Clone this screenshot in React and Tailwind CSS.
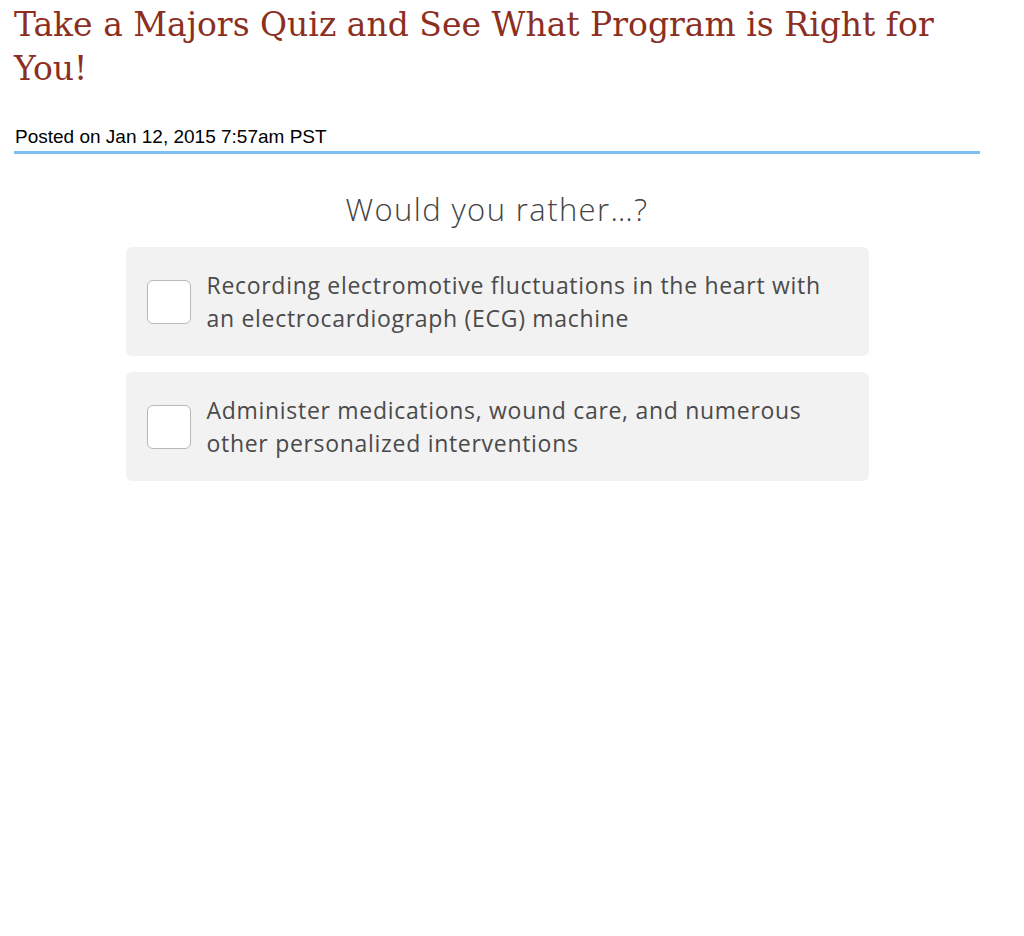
import React from 'react';

const answers = [
  'Recording electromotive fluctuations in the heart with an electrocardiograph (ECG) machine',
  'Administer medications, wound care, and numerous other personalized interventions',
];

function Answer({ text }) {
  return (
    <label className="flex items-center gap-4 bg-[#f2f2f2] rounded-md pl-[21px] pr-[30px] h-[109px] cursor-pointer">
      <span className="shrink-0 w-[44px] h-[44px] bg-white border border-[#b8b8b8] rounded-[6px]" />
      <span className="text-[23px] leading-[33px] tracking-[0.7px] text-[#4a4a4a]">{text}</span>
    </label>
  );
}

export default function App() {
  return (
    <div className="min-h-screen bg-white">
      <div className="w-[966px] ml-[14px]">
        <h1 className="text-[33px] leading-[44px] text-[#8c2f22] pt-[3px]" style={{ fontFamily: '"DejaVu Serif", serif' }}>
          Take a Majors Quiz and See What Program is Right for You!
        </h1>

        <div className="mt-[35px] pb-[4px] border-b-[3px] border-[#7cc0f0]" style={{ fontFamily: '"Liberation Sans", Arial, sans-serif' }}>
          <p className="text-[19px] leading-[21px] text-black pl-[1px]">Posted on Jan 12, 2015 7:57am PST</p>
        </div>

        <div className="flex flex-col items-center pt-[33px]" style={{ fontFamily: '"Open Sans", Lato, sans-serif' }}>
          <h2 className="text-[31px] leading-[44px] tracking-[1.4px] font-light text-[#444]">Would you rather…?</h2>
          <div className="w-[743px] mt-[16px] flex flex-col gap-4">
            {answers.map((a) => (
              <Answer key={a} text={a} />
            ))}
          </div>
        </div>
      </div>
    </div>
  );
}
